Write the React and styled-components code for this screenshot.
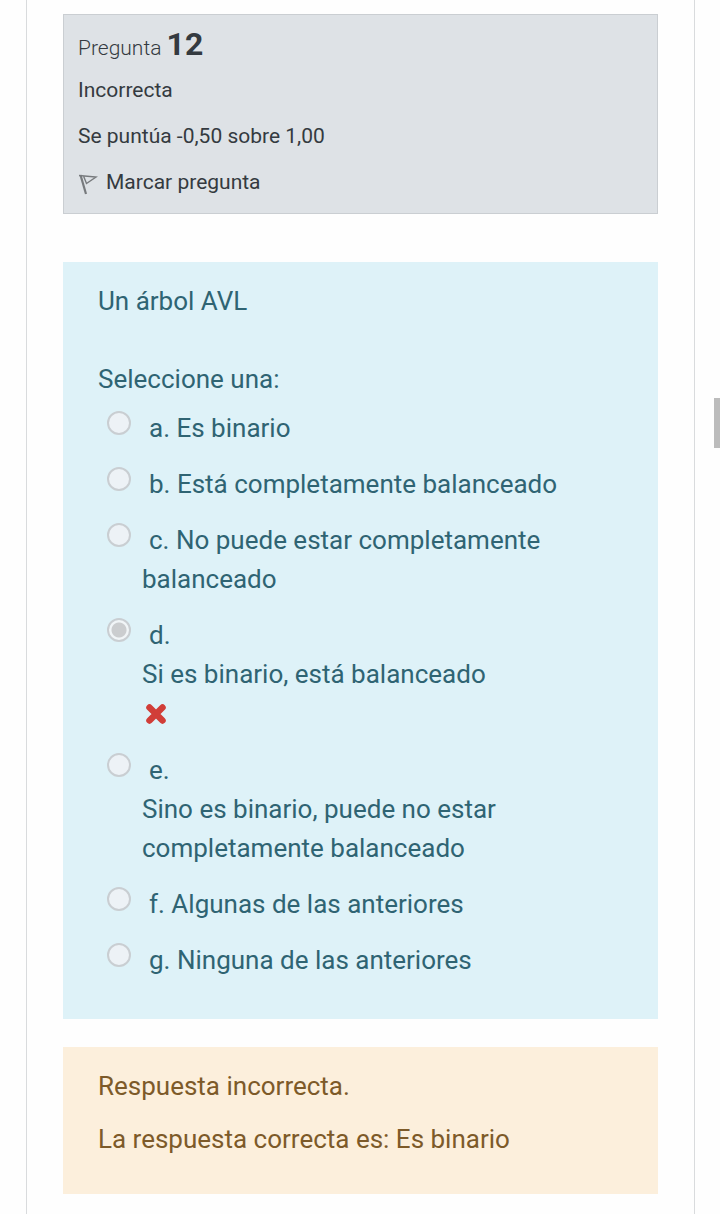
import React from "react";
import styled, { createGlobalStyle } from "styled-components";

const GlobalStyle = createGlobalStyle`
  *, *::before, *::after { box-sizing: border-box; }
  body {
    margin: 0;
    background: #fefefe;
    font-family: Roboto, "Liberation Sans", sans-serif;
    color: #343a40;
  }
`;

const Page = styled.main`
  min-height: 100vh;
  margin: 0 25px 0 26px;
  padding: 14px 36px 20px;
  border: solid #d9dbdd;
  border-width: 0 1px;
`;

const InfoCard = styled.section`
  display: flex;
  flex-direction: column;
  gap: 14px;
  margin-bottom: 48px;
  padding: 13px 14px 15px;
  border: 1px solid #caced2;
  background: #dee2e6;
  font-size: 21px;
  line-height: 32px;
`;

const QuestionTitle = styled.h3`
  margin: 0 0 -4px;
  font-size: 21px;
  font-weight: 300;
  line-height: 32px;
`;

const QuestionNumber = styled.span`
  font-size: 32px;
  font-weight: 700;
`;

const InfoText = styled.p`
  margin: 0;
`;

const FlagLink = styled.a`
  display: flex;
  align-items: center;
  gap: 8px;
  align-self: flex-start;
  color: inherit;
  text-decoration: none;
`;

const FlagIcon = styled.svg`
  width: 20px;
  height: 24px;
  margin-top: 4px;
`;

const Panel = styled.section`
  padding: ${(p) => (p.$feedback ? "20px 35px 35px" : "20px 35px 39px")};
  background: ${(p) => (p.$feedback ? "#fcefdc" : "#def2f8")};
  color: ${(p) => (p.$feedback ? "#7d5a29" : "#2f6473")};
  font-size: 26px;
  line-height: 39px;
  & + & { margin-top: 28px; }
`;

const Prompt = styled.p`
  margin: 0 0 39px;
`;

const AnswerGroup = styled.fieldset`
  min-width: 0;
  margin: 0;
  padding: 0;
  border: 0;
`;

const Legend = styled.legend`
  margin-bottom: 10px;
  padding: 0;
`;

const AnswerList = styled.div`
  display: flex;
  flex-direction: column;
  gap: 17px;
`;

const Answer = styled.div`
  display: flex;
  align-items: flex-start;
  gap: 11px;
  padding-left: 9px;
`;

const Radio = styled.input`
  appearance: none;
  flex: none;
  width: 24px;
  height: 24px;
  margin: 2px 0 0;
  border: 2px solid #c9ced2;
  border-radius: 50%;
  background: #edf2f6;
  &:checked {
    background: radial-gradient(circle, #cbcdcf 7px, #f1f5f7 8px);
  }
`;

const AnswerBody = styled.div`
  flex: 1;
  min-width: 0;
`;

const AnswerLabel = styled.label`
  display: block;
  text-indent: 7px;
`;

const WrongIcon = styled.svg`
  display: block;
  width: 28px;
  height: 40px;
`;

const FeedbackText = styled.p`
  margin: 0 0 14px;
  &:last-child { margin-bottom: 0; }
`;

const ScrollThumb = styled.div`
  position: fixed;
  top: 398px;
  right: 0;
  width: 6px;
  height: 50px;
  background: #bcbcbc;
`;

const answers = [
  { id: "a", text: "Es binario" },
  { id: "b", text: "Está completamente balanceado" },
  { id: "c", text: "No puede estar completamente balanceado" },
  { id: "d", text: "Si es binario, está balanceado", ownLine: true, wrong: true },
  { id: "e", text: "Sino es binario, puede no estar completamente balanceado", ownLine: true },
  { id: "f", text: "Algunas de las anteriores" },
  { id: "g", text: "Ninguna de las anteriores" },
];

export default function App() {
  return (
    <>
      <GlobalStyle />
      <Page>
        <InfoCard>
          <QuestionTitle>
            Pregunta <QuestionNumber>12</QuestionNumber>
          </QuestionTitle>
          <InfoText>Incorrecta</InfoText>
          <InfoText>Se puntúa -0,50 sobre 1,00</InfoText>
          <FlagLink href="#marcar">
            <FlagIcon viewBox="0 0 20 24" fill="none" stroke="#777a7d" aria-hidden="true">
              <path d="M2.5 3 8 22" strokeWidth="2.2" />
              <path d="M1 3.5 18 5 8.500 11.500 5.500 4" strokeWidth="1.4" />
            </FlagIcon>
            Marcar pregunta
          </FlagLink>
        </InfoCard>

        <Panel>
          <Prompt>Un árbol AVL</Prompt>
          <AnswerGroup>
            <Legend>Seleccione una:</Legend>
            <AnswerList>
              {answers.map(({ id, text, ownLine, wrong }) => (
                <Answer key={id}>
                  <Radio
                    type="radio"
                    name="answer"
                    id={`answer-${id}`}
                    defaultChecked={wrong}
                    disabled
                  />
                  <AnswerBody>
                    <AnswerLabel htmlFor={`answer-${id}`}>
                      {`${id}. `}
                      {ownLine && <br />}
                      {text}
                    </AnswerLabel>
                    {wrong && (
                      <WrongIcon viewBox="0 0 28 40" role="img" aria-label="Incorrecta">
                        <path
                          d="M7.500 13.500 20.500 26.500M20.500 13.500 7.500 26.500"
                          stroke="#d13e38"
                          strokeWidth="6.500"
                          strokeLinecap="round"
                        />
                      </WrongIcon>
                    )}
                  </AnswerBody>
                </Answer>
              ))}
            </AnswerList>
          </AnswerGroup>
        </Panel>

        <Panel $feedback>
          <FeedbackText>Respuesta incorrecta.</FeedbackText>
          <FeedbackText>La respuesta correcta es: Es binario</FeedbackText>
        </Panel>
      </Page>
      <ScrollThumb />
    </>
  );
}
